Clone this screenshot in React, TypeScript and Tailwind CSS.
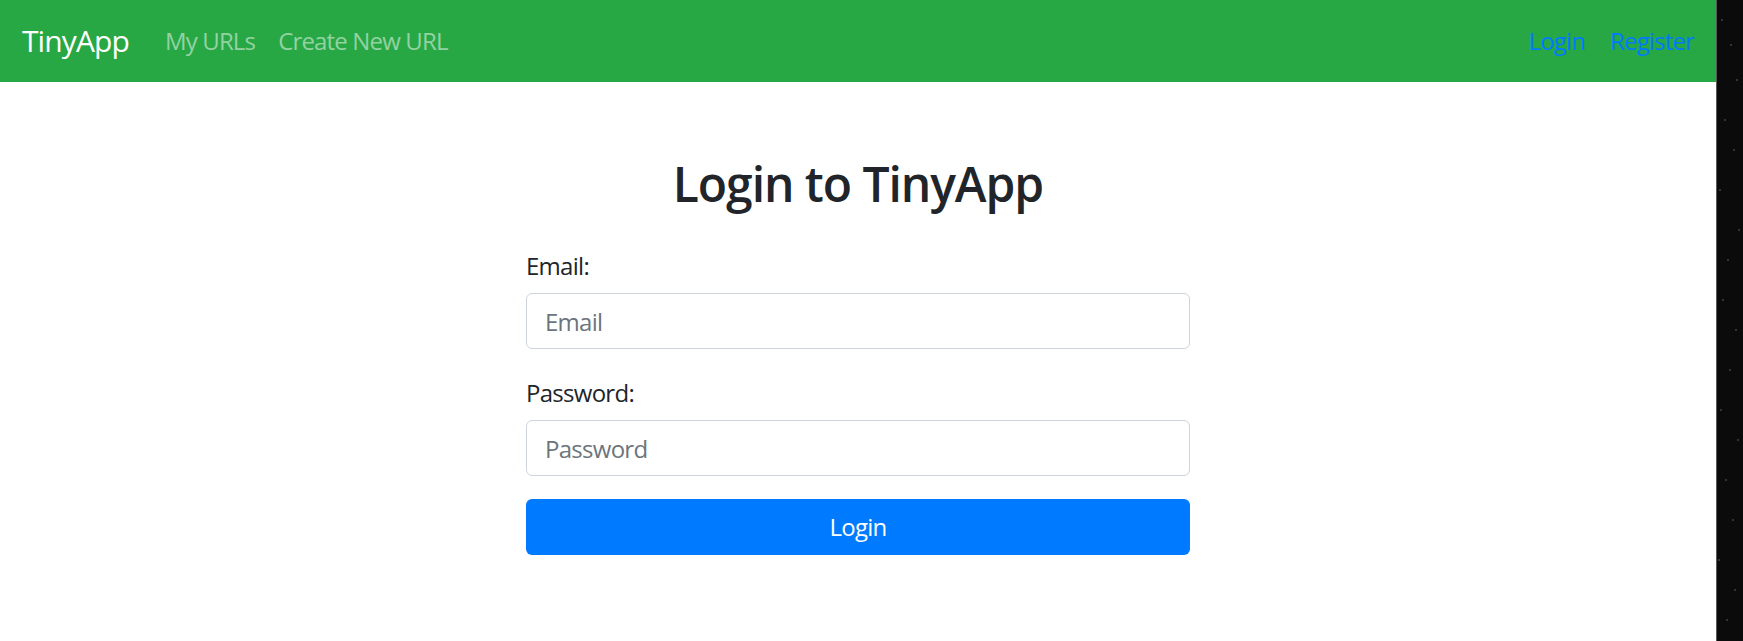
import React from "react";

export default function App() {
  const font = { fontFamily: '"Open Sans", "Noto Sans", sans-serif' };
  return (
    <div className="flex w-full h-[641px] overflow-hidden" style={font}>
      <div className="w-[1716px] shrink-0 bg-white flex flex-col">
        <nav className="h-[82px] bg-[#28a745] flex items-center px-[22px]">
          <a className="text-[30px] tracking-[-0.03em] text-white leading-none mr-[36px]">TinyApp</a>
          <a className="text-[24px] tracking-[-0.035em] text-[#93d3a2] leading-none mr-[23px]">My URLs</a>
          <a className="text-[24px] tracking-[-0.035em] text-[#93d3a2] leading-none">Create New URL</a>
          <div className="flex-1" />
          <a className="text-[24px] tracking-[-0.035em] text-[#007bff] leading-none mr-[25px]">Login</a>
          <a className="text-[24px] tracking-[-0.035em] text-[#007bff] leading-none">Register</a>
        </nav>
        <div className="w-[664px] mx-auto flex flex-col pt-[73px]">
          <h2 className="text-[48px] font-semibold tracking-[-0.022em] text-[#212529] leading-[58px] text-center">Login to TinyApp</h2>
          <label className="mt-[35px] text-[24px] tracking-[-0.03em] leading-[36px] text-[#212529]">Email:</label>
          <input
            type="email"
            placeholder="Email"
            className="mt-[9px] h-[56px] w-full border border-[#ced4da] rounded-[6px] px-[18px] text-[24px] tracking-[-0.03em] text-[#495057] placeholder:text-[#6c757d] outline-none"
          />
          <label className="mt-[26px] text-[24px] tracking-[-0.03em] leading-[36px] text-[#212529]">Password:</label>
          <input
            type="password"
            placeholder="Password"
            className="mt-[9px] h-[56px] w-full border border-[#ced4da] rounded-[6px] px-[18px] text-[24px] tracking-[-0.03em] text-[#495057] placeholder:text-[#6c757d] outline-none"
          />
          <button className="mt-[23px] h-[56px] w-full bg-[#007bff] rounded-[6px] text-white text-[24px] tracking-[-0.03em]">Login</button>
        </div>
      </div>
      <div className="flex-1 bg-[#0b0b0b] border-l border-[#5a5a5a] relative">
        <svg className="absolute inset-0 w-full h-full" viewBox="0 0 26 641" preserveAspectRatio="none">
          {[
            [5, 20], [14, 45], [20, 80], [8, 120], [17, 150], [3, 190], [22, 230], [11, 260], [6, 300], [19, 330],
            [13, 370], [4, 410], [21, 440], [9, 480], [16, 520], [2, 560], [18, 590], [10, 620],
          ].map(([x, y], i) => (
            <circle key={i} cx={x} cy={y} r={0.8} fill="#666" />
          ))}
        </svg>
      </div>
    </div>
  );
}
